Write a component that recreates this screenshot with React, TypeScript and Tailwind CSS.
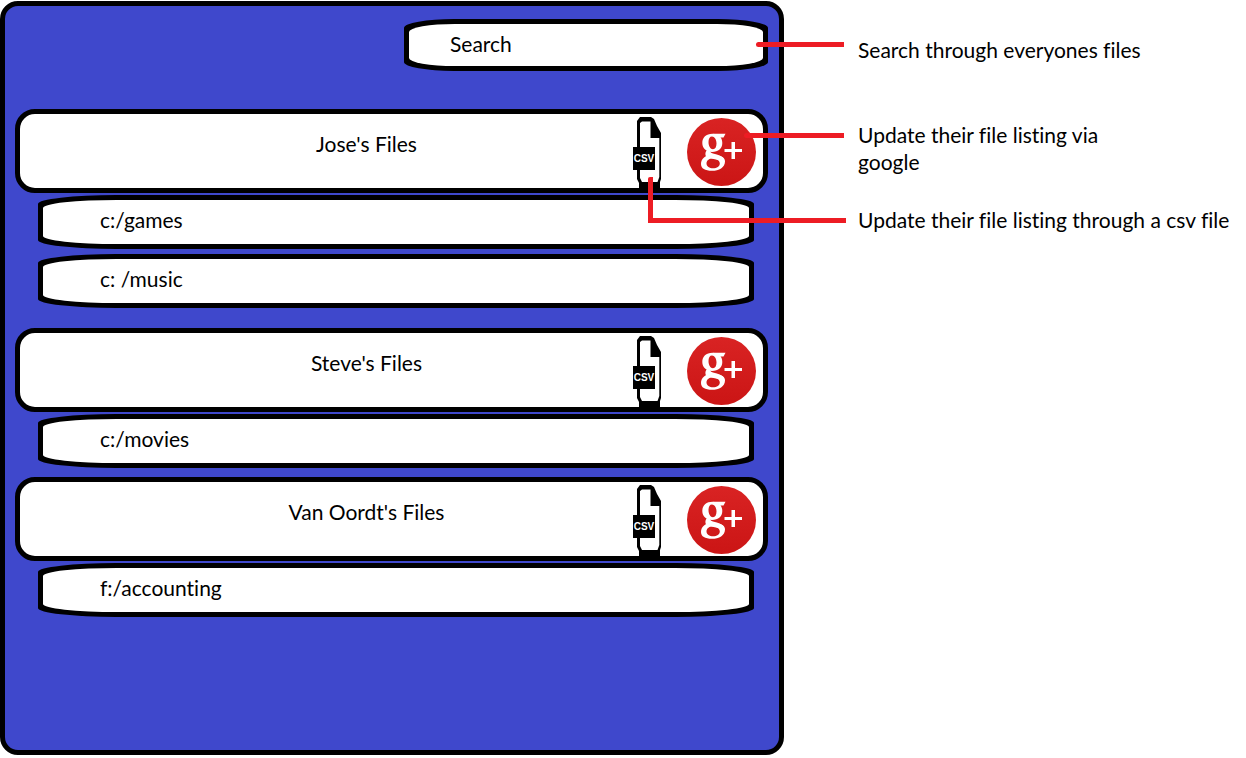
import React from "react";

type Group = { owner: string; files: string[]; spacing: string };

const groups: Group[] = [
  { owner: "Jose's Files", files: ["c:/games", "c: /music"], spacing: "mt-[38px]" },
  { owner: "Steve's Files", files: ["c:/movies"], spacing: "mt-5" },
  { owner: "Van Oordt's Files", files: ["f:/accounting"], spacing: "mt-[9px]" },
];

function CsvIcon() {
  return (
    <svg width="28" height="71" viewBox="0 0 28 71" aria-hidden="true">
      <path d="M7 0H18L21 2L24 9L28 16V62L27 65V71H6V66L4 62V4Z" fill="#000" />
      <path d="M9 4.500H17.500V21H26.300V60L24.500 65H9L7 61V6Z" fill="#fff" />
      <rect x="0" y="30" width="22" height="23" fill="#000" />
      <text
        x="11"
        y="45"
        textAnchor="middle"
        fill="#fff"
        fontSize="10"
        fontWeight="700"
        fontFamily="'Liberation Sans', sans-serif"
      >
        CSV
      </text>
    </svg>
  );
}

function GooglePlusIcon() {
  return (
    <svg width="69" height="68" viewBox="0 0 69 68" aria-hidden="true">
      <defs>
        <linearGradient id="badge" x1="0" y1="0" x2="0" y2="1">
          <stop offset="0" stopColor="#d92323" />
          <stop offset="1" stopColor="#cb1515" />
        </linearGradient>
      </defs>
      <ellipse cx="34.500" cy="34" rx="34.500" ry="34" fill="url(#badge)" />
      <g fill="#fff">
        <path d="M26 15.700H38.500L36.500 19.500H30Z" />
        <path
          fillRule="evenodd"
          d="M25.500 15.700C19 15.700 15.300 19.500 15.300 25C15.300 30.500 19.500 34 25 34C31.500 34 35.300 30.500 35.300 25C35.300 19.500 32 15.700 25.500 15.700ZM25 18.500C27.500 18.500 29.500 21.500 29.500 25.500C29.500 29 28.200 31.200 26 31.200C23.300 31.200 21.500 28 21.500 24C21.500 20.500 22.800 18.500 25 18.500Z"
        />
        <path d="M23.500 31.500C22.500 33 23 34.500 26 35.500C31 37 37.500 38 37.500 44L31 42L20 39.500C17.800 37.500 17.800 34 20.500 31.500Z" />
        <path
          fillRule="evenodd"
          d="M24.500 37C33 37 38 38.500 38 43.500C38 49.500 32 52.800 25 52.800C18 52.800 14 50.500 14 46C14 41 18 37 24.500 37ZM25.500 40.500C22 40.500 19.500 42.500 19.500 45.500C19.500 48.500 22.500 50.300 26 50.300C30 50.300 32.800 48.300 32.800 45.500C32.800 42.500 29.500 40.500 25.500 40.500Z"
        />
        <path d="M37.500 31H44.500V24H48V31H55V34H48V41H44.500V34H37.500Z" />
      </g>
    </svg>
  );
}

function SlopedBox({ children }: { children: React.ReactNode }) {
  return (
    <div className="rounded-[78px/9px] bg-black p-[5px]">
      <div className="flex h-11 items-center rounded-[74px/8px] bg-white">{children}</div>
    </div>
  );
}

function OwnerHeader({ owner, annotated }: { owner: string; annotated: boolean }) {
  return (
    <div className="relative flex h-[84px] items-end rounded-[20px] border-[5px] border-black bg-white pr-[7px]">
      <h2 className="flex-1 self-start pt-4 pl-20 text-center">{owner}</h2>
      <button type="button" aria-label={`Update ${owner} from a csv file`}>
        <CsvIcon />
      </button>
      <button type="button" aria-label={`Update ${owner} via google`} className="mb-0.5 ml-[26px]">
        <GooglePlusIcon />
      </button>
      {annotated && (
        <>
          <span className="absolute top-[19px] -right-[81px] z-10 h-[5px] w-[100px] rounded-l-full bg-[#ed1c24]" />
          <span className="absolute top-[63px] -right-[83px] z-10 h-[46px] w-[198px] rounded-t-[2px] border-b-[5px] border-l-[5px] border-[#ed1c24]" />
        </>
      )}
    </div>
  );
}

export default function App() {
  return (
    <div className="grid min-h-screen grid-cols-[784fr_462fr] items-start bg-white font-[Lato,'Open_Sans',sans-serif] text-[21px] leading-[27px] text-black [font-variant-ligatures:none]">
      <main className="mt-px min-h-[calc(100vh-4px)] rounded-[18px] border-[5px] border-black bg-[#3f48cc] pt-[13px] pr-[11px] pb-5 pl-[10px]">
        <div className="relative ml-auto w-[364px] max-w-full">
          <div className="rounded-[50px/9px] bg-black p-[5px]">
            <input
              type="search"
              aria-label="Search"
              placeholder="Search"
              className="block h-[42px] w-full rounded-[46px/8px] bg-white pr-8 pb-1 pl-[41px] outline-none placeholder:text-black"
            />
          </div>
          <span className="absolute top-[23px] -right-[76px] h-[5px] w-[88px] rounded-l-full bg-[#ed1c24]" />
        </div>
        {groups.map((group, index) => (
          <section key={group.owner} className={group.spacing}>
            <OwnerHeader owner={group.owner} annotated={index === 0} />
            <ul className="mt-0.5 mr-[14px] ml-[23px] flex flex-col gap-[5px]">
              {group.files.map((file) => (
                <li key={file}>
                  <SlopedBox>
                    <span className="pb-[5px] pl-[57px]">{file}</span>
                  </SlopedBox>
                </li>
              ))}
            </ul>
          </section>
        ))}
      </main>
      <aside className="pt-9 pl-[74px]">
        <p>Search through everyones files</p>
        <p className="mt-[58px] max-w-[260px]">Update their file listing via google</p>
        <p className="mt-[31px]">Update their file listing through a csv file</p>
      </aside>
    </div>
  );
}
